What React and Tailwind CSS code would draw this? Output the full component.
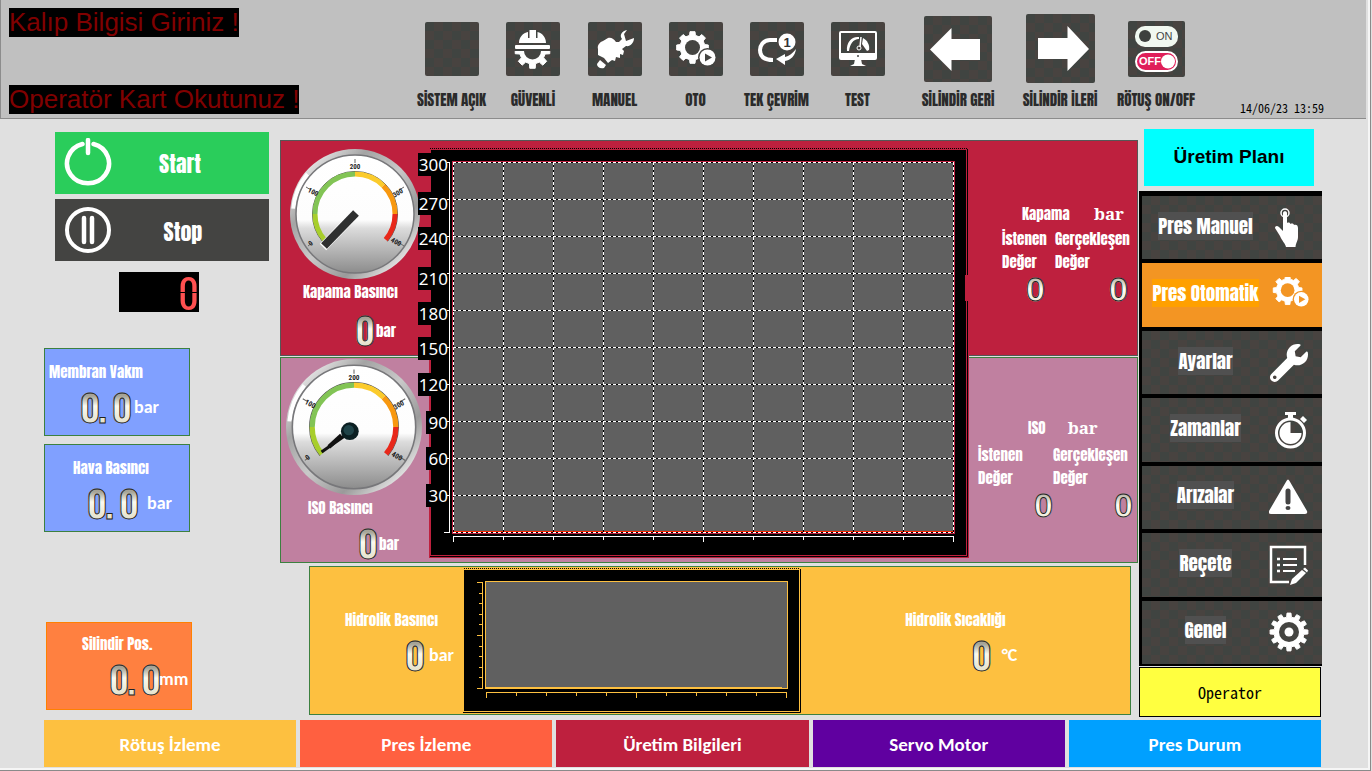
import React from "react";
import { FaWrench } from "react-icons/fa";

const anton = "font-['Anton','Oswald','Roboto_Condensed',sans-serif] font-normal";
const checker =
  "bg-[repeating-conic-gradient(#484340_0_25%,#404441_0_50%)] bg-[length:18px_18px]";
const unitText = "font-['Carlito','Lato',sans-serif] text-[18px] leading-5 font-bold";

function gearPath(cx, cy, teeth, outer, inner) {
  const step = (Math.PI * 2) / teeth;
  const pts = [];
  for (let i = 0; i < teeth; i++) {
    const a = i * step - Math.PI / 2;
    [
      [-0.3, inner],
      [-0.2, outer],
      [0.2, outer],
      [0.3, inner],
    ].forEach(([k, r]) => {
      pts.push(
        `${(cx + Math.cos(a + k * step) * r).toFixed(2)} ${(cy + Math.sin(a + k * step) * r).toFixed(2)}`
      );
    });
  }
  return `M${pts.join("L")}Z`;
}

/* ---------- icons ---------- */

function HelmetIcon() {
  return (
    <svg viewBox="0 0 54 54" className="w-full" aria-hidden="true">
      <defs>
        <clipPath id="lowerGear">
          <rect x="0" y="29" width="54" height="25" />
        </clipPath>
      </defs>
      <path d="M13 21C13 15 17 11 22 10V16H23.500V8H30V16H31.500V10C36 11 40 15 40 21Z" fill="#fff" />
      <rect x="9" y="23" width="35" height="4" rx="1" fill="#fff" />
      <g clipPath="url(#lowerGear)">
        <path d={gearPath(26.5, 29, 8, 17.5, 13)} fill="#fff" stroke="#fff" strokeWidth="1" />
        <circle cx="26.500" cy="29" r="8.500" fill="#444441" />
      </g>
    </svg>
  );
}

function HandWrenchIcon() {
  return (
    <svg viewBox="0 0 54 54" className="w-full" aria-hidden="true">
      <path
        d="M10 27C9 23 12 20 15 19L20 16C23 15 26 17 28 20L31 20L34 17C31 13 34 9 39 8L36 12L38 19L46 16C46 21 42 25 38 24L34 27L36 29L35 33L32 32L32 36L28 35L27 39L24 38L20 41L16 36L10 33Z"
        fill="#fff"
      />
      <path d="M12 38L18 43L16 46C12 47 9 45 9 42Z" fill="#fff" />
    </svg>
  );
}

function GearPlayIcon({ hole = "#444441", viewBox = "0 0 54 54" }) {
  return (
    <svg viewBox={viewBox} className="w-full" aria-hidden="true">
      <path d={gearPath(23.5, 25.5, 8, 16, 12.5)} fill="#fff" stroke="#fff" strokeWidth="1" strokeLinejoin="round" />
      <circle cx="23.500" cy="25.500" r="7.500" fill={hole} />
      <circle cx="38.500" cy="35.500" r="9.500" fill={hole} />
      <circle cx="38.500" cy="35.500" r="8" fill="#fff" />
      <path d="M36 31.500L43 35.500L36 39.500Z" fill={hole} />
    </svg>
  );
}

function LoopIcon() {
  return (
    <svg viewBox="0 0 54 54" className="w-full" aria-hidden="true">
      <path d="M27 18H20C13 18 10 24 10 28C10 34 14 38 23 38" fill="none" stroke="#fff" strokeWidth="4" />
      <path d="M46 27C45 34 41 38 35 39V43L26 37L35 32V35C39 34 43 31 46 27Z" fill="#fff" />
      <circle cx="37" cy="20" r="8.500" fill="#fff" />
      <text x="37" y="25" textAnchor="middle" fill="#333" className="font-['Liberation_Sans',sans-serif] text-[13px] font-bold">
        1
      </text>
    </svg>
  );
}

function MonitorIcon() {
  return (
    <svg viewBox="0 0 54 54" className="w-full" aria-hidden="true">
      <rect x="9" y="10" width="36" height="27" rx="1" fill="none" stroke="#fff" strokeWidth="2" />
      <rect x="9" y="31" width="36" height="6" fill="#fff" />
      <circle cx="27" cy="34" r="1" fill="#444" />
      <path d="M24 37H30L31 42L35 44H19L23 42Z" fill="#fff" />
      <path d="M16 29C15 20 21 14 28 15V17C22 17 19 22 18 29Z" fill="#fff" />
      <path d="M32 16C36 18 39 23 38 28L36 29L31 22Z" fill="#fff" />
      <path d="M30 15L29 25" stroke="#fff" strokeWidth="1.500" />
      <circle cx="28" cy="26" r="2" fill="none" stroke="#fff" strokeWidth="1" />
    </svg>
  );
}

function ArrowLeftIcon() {
  return (
    <svg viewBox="0 0 68 66" className="w-full" aria-hidden="true">
      <path d="M6 33.500L27.500 12V23H56V44H27.500V55Z" fill="#fff" />
    </svg>
  );
}

function ArrowRightIcon() {
  return (
    <svg viewBox="0 0 69 69" className="w-full" aria-hidden="true">
      <path d="M63 35L41.500 12V24H12V45H41.500V57Z" fill="#fff" />
    </svg>
  );
}

function OnOffIcon() {
  return (
    <svg viewBox="0 0 57 56" className="w-full" aria-hidden="true">
      <rect x="7" y="5" width="43" height="21" rx="10" fill="#f1f8f0" />
      <circle cx="17" cy="15" r="6" fill="#3e403e" />
      <text x="28" y="19" fill="#444" className="font-['Liberation_Sans',sans-serif] text-[11px]">
        ON
      </text>
      <rect x="8" y="31" width="41" height="19" rx="9.500" fill="#e01f5a" stroke="#fff" strokeWidth="2" />
      <circle cx="40" cy="40.500" r="7" fill="#fff" />
      <text x="11" y="44" fill="#fff" className="font-['Liberation_Sans',sans-serif] text-[11px] font-bold">
        OFF
      </text>
    </svg>
  );
}

function PowerIcon() {
  return (
    <svg viewBox="0 0 50 50" className="w-[50px]" aria-hidden="true">
      <path d="M19.500 6A21 20 0 1 0 30.500 6" fill="none" stroke="#fff" strokeWidth="4.500" strokeLinecap="round" />
      <path d="M25 2V15" stroke="#fff" strokeWidth="4.500" strokeLinecap="round" />
    </svg>
  );
}

function PauseIcon() {
  return (
    <svg viewBox="0 0 50 50" className="w-[50px]" aria-hidden="true">
      <circle cx="25" cy="25" r="21" fill="none" stroke="#fff" strokeWidth="4" />
      <path d="M21 13V37M29 13V37" stroke="#fff" strokeWidth="4.500" strokeLinecap="round" />
    </svg>
  );
}

function TouchIcon() {
  return (
    <svg viewBox="0 0 40 40" className="w-full" aria-hidden="true">
      <circle cx="16" cy="5" r="4" fill="none" stroke="#fff" strokeWidth="1.500" />
      <path
        d="M14 5C14 2.500 18 2.500 18 5V15C20 14 21 15 21.500 16C23 15 25 16 25 17C27 16 29 17 29 20V29C29 33 27 34 26.500 39H17C16 35 13 33 11 28L6 20C6 18 8 17 10 19L14 23Z"
        fill="#fff"
      />
    </svg>
  );
}

function StopwatchIcon() {
  return (
    <svg viewBox="0 0 40 40" className="w-full" aria-hidden="true">
      <path d="M16 2H27V5H24V9H19V5H16Z" fill="#fff" />
      <path d="M31 9L34 6L38 10L35 13Z" fill="#fff" />
      <circle cx="21.500" cy="23" r="14" fill="none" stroke="#fff" strokeWidth="3" />
      <path d="M21.500 12V23H32.500A11 11 0 1 1 21.500 12Z" fill="#fff" />
    </svg>
  );
}

function WarningIcon() {
  return (
    <svg viewBox="0 0 40 40" className="w-full" aria-hidden="true">
      <path d="M17.500 4Q19 1 20.500 4L38 34Q39 37 36 37H2Q-1 37 0 34Z" fill="#fff" />
      <path d="M19 14V25" stroke="#444" strokeWidth="5" strokeLinecap="round" />
      <ellipse cx="19" cy="31" rx="2.500" ry="2" fill="#444" />
    </svg>
  );
}

function RecipeIcon() {
  return (
    <svg viewBox="0 0 40 40" className="w-full" aria-hidden="true">
      <path d="M20 37H2V2H36V20" fill="none" stroke="#fff" strokeWidth="2.500" />
      <path d="M14 14H28M14 20H28M14 26H26" stroke="#fff" strokeWidth="2" />
      <path d="M8 14H11M8 20H11M8 26H11" stroke="#fff" strokeWidth="2.500" />
      <path d="M21 40L23 34L33 25L37 28L27 38Z" fill="#fff" />
      <path d="M34 24L36 22.500L39 25.500L38 27.500Z" fill="#fff" />
    </svg>
  );
}

function SettingsIcon() {
  return (
    <svg viewBox="0 0 40 40" className="w-full" aria-hidden="true">
      <path d={gearPath(20, 20, 12, 19, 15)} fill="#fff" stroke="#fff" strokeWidth="1" />
      <circle cx="20" cy="20" r="10" fill="#444441" />
      <circle cx="20" cy="20" r="4.500" fill="#fff" />
    </svg>
  );
}

/* ---------- readouts ---------- */

function Digits({ value }) {
  return (
    <output className="flex h-9 shrink-0 items-start">
      {value.split("").map((c, i) => (
        <span key={i} className={`flex w-4 ${c === "." ? "justify-start" : "justify-center"}`}>
          <span className="bg-linear-to-b from-[#a5a397] from-20% via-[#fbfaf0] via-50% to-[#e4e1cc] bg-clip-text font-['Oswald','Roboto_Condensed',sans-serif] text-[38px] leading-[34px] font-semibold text-transparent [-webkit-text-stroke:1px_#222]">
            {c}
          </span>
        </span>
      ))}
    </output>
  );
}

function WideDigit({ value }) {
  return (
    <output className="bg-linear-to-b from-[#b5b3a6] from-20% via-[#fffef4] via-50% to-[#e4e1cc] bg-clip-text font-['Liberation_Sans',sans-serif] text-[34px] leading-8 font-bold text-transparent [-webkit-text-stroke:1px_#222]">
      {value}
    </output>
  );
}

function ValueCard({ label, value, unit, className, labelClass, rowClass }) {
  return (
    <section className={`h-[88px] w-[146px] border text-white ${className}`}>
      <h2 className={`${anton} text-[15px] leading-6 ${labelClass}`}>{label}</h2>
      <div className={`mt-[5px] flex items-center ${rowClass}`}>
        <Digits value={value} />
        <span className={unitText}>{unit}</span>
      </div>
    </section>
  );
}

function arc(a0, a1, r) {
  const p = (a) => {
    const t = ((a - 90) * Math.PI) / 180;
    return `${(Math.cos(t) * r).toFixed(2)} ${(Math.sin(t) * r).toFixed(2)}`;
  };
  return `M${p(a0)}A${r} ${r} 0 0 1 ${p(a1)}`;
}

const zones = [
  [-130, -90, "#a8ce2c"],
  [-90, 0, "#82c455"],
  [0, 45, "#fbcb2c"],
  [45, 90, "#f8980f"],
  [90, 130, "#e8281a"],
];

function Gauge({ id, needle }) {
  return (
    <svg viewBox="-66 -66 132 132" className="w-full" aria-hidden="true">
      <defs>
        <linearGradient id={`${id}rim`} x1="0" y1="0" x2="1" y2="1">
          <stop offset="0" stopColor="#b5b5b5" />
          <stop offset="0.150" stopColor="#dedede" />
          <stop offset="0.300" stopColor="#a4a4a4" />
          <stop offset="0.500" stopColor="#c9c9c9" />
          <stop offset="0.700" stopColor="#9a9a9a" />
          <stop offset="0.850" stopColor="#dcdcdc" />
          <stop offset="1" stopColor="#999" />
        </linearGradient>
        <linearGradient id={`${id}face`} x1="0" y1="0" x2="0" y2="1">
          <stop offset="0" stopColor="#fff" />
          <stop offset="0.550" stopColor="#fdfdfd" />
          <stop offset="0.620" stopColor="#dcdcdc" />
          <stop offset="1" stopColor="#8c8c8c" />
        </linearGradient>
      </defs>
      <circle r="65" fill={`url(#${id}rim)`} />
      <path d={arc(-85, -50, 62)} fill="none" stroke="#fff" strokeWidth="4" />
      <circle r="59" fill={`url(#${id}face)`} stroke="#77777a" strokeWidth="1.500" />
      {zones.map(([a, b, c]) => (
        <g key={a} fill="none">
          <path d={arc(a, b, 42.5)} stroke="#555" strokeWidth="1" />
          <path d={arc(a, b, 40)} stroke={c} strokeWidth="5" />
        </g>
      ))}
      <g stroke="#666" strokeWidth="1">
        <path d="M0 -55V-51M-49 -27L-44 -24M49 -27L44 -24M-47 32L-43 29M49 32L43 28" />
      </g>
      <g fill="#222" textAnchor="middle" className="font-['Roboto_Condensed',sans-serif] text-[7px] font-bold">
        <text y="-45">200</text>
        <text transform="translate(-43 -20) rotate(28)">100</text>
        <text transform="translate(44 -19) rotate(-30)">300</text>
        <text transform="translate(-43 31) rotate(-40)">0</text>
        <text transform="translate(40 30) rotate(28)">400</text>
      </g>
      {needle === "bar" ? (
        <g>
          <path d="M0 0L-32 33" stroke="#fff" strokeWidth="9" />
          <path d="M1 -1L-31 32" stroke="#2f3030" strokeWidth="8" />
        </g>
      ) : (
        <g>
          <path d="M-4 5L-31 24" stroke="#111" strokeWidth="3" />
          <circle cx="-4" cy="4" r="8.500" fill="#0b1f22" />
          <circle cx="-5" cy="3" r="5" fill="#1f4348" />
          <path d="M-12 8L-24 19" stroke="#111" strokeWidth="4" />
        </g>
      )}
    </svg>
  );
}

/* ---------- charts ---------- */

const yLabels = [
  ["300", 153],
  ["270", 192],
  ["240", 227],
  ["210", 267],
  ["180", 302],
  ["150", 337],
  ["120", 373],
  ["90", 411],
  ["60", 447],
  ["30", 484],
];
const eleven = Array.from({ length: 11 }, (_, i) => i);

function PressureChart() {
  const grid = [
    ...eleven.map((i) => `M${453.5 + i * 50} 162V533`),
    ...eleven.map((i) => `M453 ${162.5 + i * 37}H954`),
  ].join("");
  return (
    <svg viewBox="418 147 551 411" className="w-full" role="img" aria-label="Basınç grafiği">
      <rect x="429" y="149" width="540" height="409" fill="#be203e" />
      <path d="M430 148.500H967" stroke="#000" strokeDasharray="1 1" />
      <rect x="431" y="150" width="535" height="405" fill="#000" />
      <path d="M967.500 149V556.500H430" fill="none" stroke="#000" />
      <rect x="965" y="275" width="4" height="26" fill="#be203e" />
      <rect x="452" y="161" width="503" height="373" fill="#be203e" />
      <rect x="453" y="162" width="501" height="371" fill="#606060" />
      <path d="M453 531.500H953" stroke="#ff2a00" />
      <path d={grid} stroke="#000" />
      <path d={grid} stroke="#fff" strokeDasharray="3 2" />
      {yLabels.map(([t, y]) => (
        <g key={t}>
          <rect x={t.length > 2 ? 418 : 426} y={y} width={t.length > 2 ? 31 : 23} height="23" fill="#000" />
          <text x="448" y={y + 18} textAnchor="end" fill="#fff" className="font-['Noto_Sans',sans-serif] text-[17px] font-normal">
            {t}
          </text>
        </g>
      ))}
      <path
        d={"M449.500 162V532.500" + eleven.map((i) => `M${i === 10 ? 444 : 447} ${162.5 + i * 37}H450`).join("")}
        fill="none"
        stroke="#fff"
      />
      <path
        d={"M453 536.500H954" + eleven.map((i) => `M${453.5 + i * 50} 536V${i % 5 ? 540 : 542}`).join("")}
        fill="none"
        stroke="#fff"
      />
    </svg>
  );
}

function HydraulicChart() {
  return (
    <svg viewBox="463 567 338 146" className="w-[338px] shrink-0" role="img" aria-label="Hidrolik basınç grafiği">
      <path d="M464 568.500H800" stroke="#000" strokeDasharray="1 1" />
      <rect x="464" y="570" width="335" height="141" fill="#000" />
      <path d="M800.500 569V712.500H463" fill="none" stroke="#000" />
      <rect x="485.500" y="581.500" width="302" height="107" fill="#606060" stroke="#fdc040" />
      <rect x="485" y="687" width="297" height="2" fill="#fdc040" />
      <path
        d={"M482.500 582V689" + eleven.map((i) => `M${i % 5 ? 479 : 477} ${582.5 + Math.round(i * 10.6)}H483`).join("")}
        stroke="#fdc040"
      />
      <path
        d={"M486 692.500H787" + eleven.map((i) => `M${486.5 + i * 30} 692V${i % 5 ? 696 : 698}`).join("")}
        stroke="#fdc040"
      />
    </svg>
  );
}

/* ---------- data ---------- */

const modes = [
  { label: "SİSTEM AÇIK", icon: null, cell: "w-[81px]", box: "h-[54px] w-[54px]" },
  { label: "GÜVENLİ", icon: <HelmetIcon />, cell: "w-[82px]", box: "h-[54px] w-[54px]" },
  { label: "MANUEL", icon: <HandWrenchIcon />, cell: "w-[81px]", box: "h-[54px] w-[54px]" },
  { label: "OTO", icon: <GearPlayIcon />, cell: "w-[81px]", box: "h-[54px] w-[54px]" },
  { label: "TEK ÇEVRİM", icon: <LoopIcon />, cell: "w-[81px]", box: "h-[54px] w-[54px]" },
  { label: "TEST", icon: <MonitorIcon />, cell: "w-[81px]", box: "h-[54px] w-[54px]" },
  { label: "SİLİNDİR GERİ", icon: <ArrowLeftIcon />, cell: "w-[120px]", box: "h-[66px] w-[68px]" },
  { label: "SİLİNDİR İLERİ", icon: <ArrowRightIcon />, cell: "w-[84px]", box: "h-[69px] w-[69px]" },
  { label: "RÖTUŞ ON/OFF", icon: <OnOffIcon />, cell: "w-[108px]", box: "h-[56px] w-[57px]" },
];

const menu = [
  { label: "Pres Manuel", icon: <TouchIcon /> },
  { label: "Pres Otomatik", icon: <GearPlayIcon hole="#f39523" viewBox="3 11 44 40" />, active: true },
  { label: "Ayarlar", icon: <FaWrench className="h-[38px] w-[38px] text-white" /> },
  { label: "Zamanlar", icon: <StopwatchIcon /> },
  { label: "Arızalar", icon: <WarningIcon /> },
  { label: "Reçete", icon: <RecipeIcon /> },
  { label: "Genel", icon: <SettingsIcon /> },
];

const pages = [
  ["Rötuş İzleme", "bg-[#fdc040]"],
  ["Pres İzleme", "bg-[#ff6040]"],
  ["Üretim Bilgileri", "bg-[#be203e]"],
  ["Servo Motor", "bg-[#6000a0]"],
  ["Pres Durum", "bg-[#00a0ff]"],
];

function Targets({ title, headClass, gridClass }) {
  return (
    <div>
      <div className={`flex items-center ${headClass}`}>
        <h2>{title}</h2>
        <span className="font-['Noto_Serif',serif] text-[17px] leading-[23px] font-bold">bar</span>
      </div>
      <dl className={`grid ${gridClass}`}>
        <div className="flex flex-col">
          <dt>
            İstenen
            <br />
            Değer
          </dt>
          <dd className="self-end">
            <WideDigit value="0" />
          </dd>
        </div>
        <div className="flex flex-col">
          <dt>
            Gerçekleşen
            <br />
            Değer
          </dt>
          <dd className="self-end">
            <WideDigit value="0" />
          </dd>
        </div>
      </dl>
    </div>
  );
}

export default function App() {
  return (
    <div className="flex min-h-screen flex-col bg-[#e0e0e0] pr-px">
      <div className="flex grow flex-col border-r border-b border-[#8a8a8a]">
        <div className="flex grow flex-col border-r-2 border-b-2 border-r-[#f6f6f6] border-b-[#f6f6f6]">
          <header className="mr-[2px] flex h-[119px] border-b border-l border-[#8c8c8c] bg-[#c0c0c0]">
            <div className="flex w-[410px] shrink-0 flex-col items-start justify-between pt-2 pb-1 pl-2 font-['Liberation_Sans',sans-serif] text-[26px] leading-[29px] text-[#800000]">
              <p className="bg-black">Kalıp Bilgisi Giriniz !</p>
              <p className="bg-black">Operatör Kart Okutunuz !</p>
            </div>
            <div className="flex">
              {modes.map((m) => (
                <button key={m.label} type="button" className={`flex shrink-0 flex-col items-center pt-[14px] ${m.cell}`}>
                  <span className="flex h-[69px] items-center">
                    <span className={`block rounded-xs ${checker} ${m.box}`}>{m.icon}</span>
                  </span>
                  <span className={`${anton} mt-[7px] text-[15px] leading-5 whitespace-nowrap text-[#2b2b2b]`}>{m.label}</span>
                </button>
              ))}
            </div>
            <time className="ml-auto self-end pr-[42px] pb-1 font-['Noto_Sans_Mono_CJK_JP','Liberation_Mono',monospace] text-[12px] leading-3 text-black">
              14/06/23 13:59
            </time>
          </header>

          <div className="flex">
            <aside className="flex w-[280px] shrink-0 flex-col pt-[13px] pl-11 text-white">
              <div className="flex flex-col gap-[5px] pl-[11px]">
                <button type="button" className="flex h-[62px] w-[214px] items-center bg-[#2acd5b] pl-2">
                  <PowerIcon />
                  <span className={`${anton} grow pr-[22px] text-center text-[22px]`}>Start</span>
                </button>
                <button type="button" className="flex h-[62px] w-[214px] items-center bg-[#444442] pl-2">
                  <PauseIcon />
                  <span className={`${anton} grow pt-[2px] pr-4 text-center text-[22px]`}>Stop</span>
                </button>
              </div>
              <output className="mt-[11px] ml-[75px] flex h-10 w-20 items-center justify-end bg-black font-['Oswald','Roboto_Condensed',sans-serif] text-[40px] leading-10">
                <span className="bg-[linear-gradient(#ff5050_0_49%,#000_49%_53%,#ff5050_53%)] bg-clip-text text-transparent">
                  0
                </span>
              </output>
              <ValueCard
                label="Membran Vakm"
                value="0.0"
                unit="bar"
                className="mt-9 border-[#3c8040] bg-[#80a0ff] pt-[11px]"
                labelClass="pl-1"
                rowClass="gap-1 pl-[37px]"
              />
              <ValueCard
                label="Hava Basıncı"
                value="0.0"
                unit="bar"
                className="mt-2 border-[#3c8040] bg-[#80a0ff] pt-[11px]"
                labelClass="pl-7"
                rowClass="gap-[10px] pl-11"
              />
              <ValueCard
                label="Silindir Pos."
                value="0.0"
                unit="mm"
                className="mt-[90px] ml-[2px] border-[#ff8000] bg-[#ff8040] pt-[9px]"
                labelClass="pl-[35px]"
                rowClass="pl-16"
              />
            </aside>

            <main className="flex min-w-0 grow flex-col pt-[21px]">
              <div className={`grid grid-cols-[138px_minmax(0,1fr)_169px] grid-rows-[216px_206px] gap-y-px text-[15px] leading-[23px] text-white ${anton}`}>
                <section className="col-span-3 col-start-1 row-start-1 flex justify-between border border-[#565656] bg-[#be203e]">
                  <div className="w-[150px] pt-[7px] pl-2">
                    <div className="w-[132px]">
                      <Gauge id="kapama" needle="bar" />
                    </div>
                    <h2 className="pl-[14px]">Kapama Basıncı</h2>
                    <div className="mt-[9px] flex items-center gap-[3px] pl-[68px]">
                      <Digits value="0" />
                      <span>bar</span>
                    </div>
                  </div>
                  <div className="pt-[61px] pr-[9px]">
                    <Targets title="Kapama" headClass="justify-between pr-1 pl-5" gridClass="mt-[2px] grid-cols-[43px_73px] gap-x-[10px]" />
                  </div>
                </section>
                <section className="col-span-3 col-start-1 row-start-2 flex justify-between border border-[#3c8040] bg-[#c080a0]">
                  <div className="w-[150px] pl-1">
                    <div className="w-[138px]">
                      <Gauge id="iso" needle="hub" />
                    </div>
                    <h2 className="pl-[23px]">ISO Basıncı</h2>
                    <div className="mt-[6px] flex items-center gap-[3px] pl-[75px]">
                      <Digits value="0" />
                      <span>bar</span>
                    </div>
                  </div>
                  <div className="pt-[58px] pr-1">
                    <Targets title="ISO" headClass="gap-[22px] pl-[50px]" gridClass="mt-1 grid-cols-[75px_80px]" />
                  </div>
                </section>
                <div className="z-10 col-start-2 row-span-2 row-start-1 pt-[7px]">
                  <PressureChart />
                </div>
              </div>

              <section className="mt-[3px] mr-[7px] ml-[29px] flex h-[149px] border border-[#3c8040] bg-[#fdc040] text-white">
                <div className="w-[153px] shrink-0 pt-[41px] pl-[35px]">
                  <h2 className={`${anton} text-[15px] leading-6 whitespace-nowrap`}>Hidrolik Basıncı</h2>
                  <div className="mt-[5px] flex items-center gap-[6px] pl-[62px]">
                    <Digits value="0" />
                    <span className={unitText}>bar</span>
                  </div>
                </div>
                <div className="shrink-0">
                  <HydraulicChart />
                </div>
                <div className="flex grow flex-col items-center pt-[41px] pr-5">
                  <h2 className={`${anton} text-[15px] leading-6`}>Hidrolik Sıcaklığı</h2>
                  <div className="mt-[5px] flex items-center gap-3 pl-20">
                    <Digits value="0" />
                    <span className={unitText}>°C</span>
                  </div>
                </div>
              </section>
            </main>

            <aside className="mr-[46px] flex w-[184px] shrink-0 flex-col pt-[10px] pl-px">
              <button type="button" className="ml-[5px] h-[57px] w-[170px] bg-[#00ffff] font-['Liberation_Sans',sans-serif] text-[19px] font-bold text-black">
                Üretim Planı
              </button>
              <nav className="mt-[5px] flex h-[475px] flex-col gap-1 bg-black pt-[5px] pb-[2px] pl-[3px]">
                {menu.map((m) => (
                  <button
                    key={m.label}
                    type="button"
                    className={`flex min-h-0 flex-1 items-center ${m.active ? "bg-[#f39523]" : checker}`}
                  >
                    <span className="flex w-[127px] justify-center pb-1">
                      <span className={`${anton} text-[19px] leading-7 whitespace-nowrap text-white ${m.active ? "bg-[#ffa000]" : "bg-[#505050]"}`}>
                        {m.label}
                      </span>
                    </span>
                    <span className="flex w-10 justify-center">{m.icon}</span>
                  </button>
                ))}
              </nav>
              <button type="button" className="mt-px mr-px h-[50px] border border-black bg-[#ffff40] font-['Noto_Sans_Mono_CJK_JP','Liberation_Mono',monospace] text-[16px] text-black">
                Operator
              </button>
            </aside>
          </div>

          <nav className="mt-[3px] mr-[47px] mb-px ml-11 grid h-[47px] grid-cols-5 gap-1">
            {pages.map(([label, bg]) => (
              <a
                key={label}
                href="#"
                className={`flex items-center justify-center pt-1 font-['Carlito','Lato',sans-serif] text-[19px] font-bold text-white ${bg}`}
              >
                {label}
              </a>
            ))}
          </nav>
        </div>
      </div>
    </div>
  );
}
